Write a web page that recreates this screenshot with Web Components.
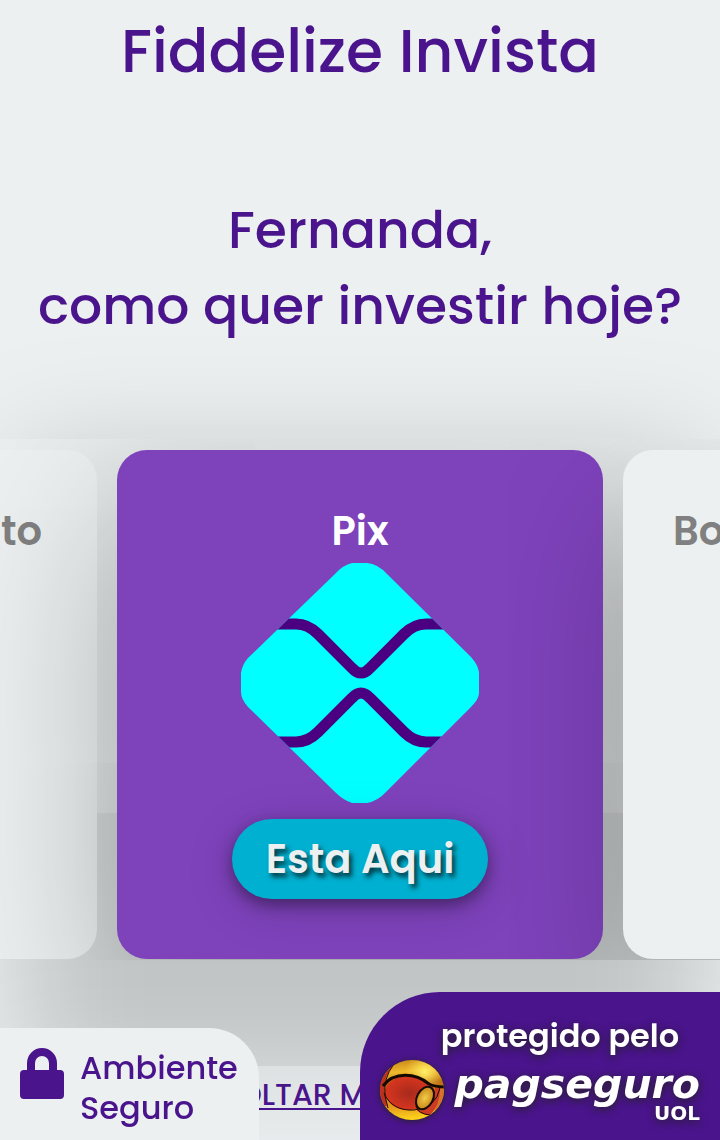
<!DOCTYPE html>
<html lang="pt-BR">
<head>
<meta charset="utf-8">
<meta name="viewport" content="width=device-width, initial-scale=1">
<title>Fiddelize Invista</title>
<style>
  html { background: #ecf0f1; }
  body { margin: 0; font-family: Poppins, Inter, sans-serif; font-weight: 500; color: #4a148c; overflow-x: hidden; }
</style>
</head>
<body>
<invest-page></invest-page>
<script>
const define = (name, html) => {
  const template = document.createElement('template');
  template.innerHTML = html;
  customElements.define(name, class extends HTMLElement {
    constructor() {
      super();
      this.attachShadow({ mode: 'open' }).append(template.content.cloneNode(true));
    }
  });
};

define('pix-logo', `
  <style>
    :host { display: block; width: 240px; }
    svg { display: block; width: 100%; }
  </style>
  <svg viewBox="0 0 240 240" role="img" aria-label="Pix">
    <clipPath id="shape"><path d="M112 0H127Q138 1 147 11L231 94Q238 102 239 109V130Q239 136 231 144L147 228Q138 238 127 240H112Q103 237 95 229L8 144Q1 136 1 129V110Q2 102 8 95L95 11Q103 2 112 0Z"/></clipPath>
    <g clip-path="url(#shape)">
      <rect width="240" height="240" fill="#00ffff"/>
      <g fill="none" stroke="#4b0082" stroke-width="11">
        <path d="M30 61H56Q68 61 78 71L112 105Q121 115 130 105L164 71Q174 61 186 61H212"/>
        <path d="M30 179H56Q68 179 78 169L112 135Q121 125 130 135L164 169Q174 179 186 179H212"/>
      </g>
    </g>
  </svg>`);

define('payment-card', `
  <style>
    :host { display: block; box-sizing: border-box; flex: 0 0 auto; width: 67.5%; min-height: 509px;
      padding: 50px 50px 60px; border-radius: 30px; background: #ecf0f1; color: #808080; text-align: center; }
    :host([selected]) { background: #7e42bb; color: #fff; box-shadow: 0 60px 170px rgba(0,0,0,.3); }
    :host([side="start"]) { text-align: right; padding-right: 55px; }
    :host([side="end"]) { text-align: left; box-shadow: 0 60px 140px rgba(0,0,0,.22); clip-path: inset(-12px -10px -2px -114px); }
    h3 { margin: 0; font-size: 40px; line-height: 63px; font-weight: 600; white-space: nowrap; }
    .body { display: flex; flex-direction: column; align-items: center; gap: 16px; }
  </style>
  <h3><slot name="title"></slot></h3>
  <div class="body"><slot></slot></div>`);

define('pill-button', `
  <style>
    :host { display: block; }
    button { width: 256px; height: 80px; border: 0; border-radius: 40px; padding: 0; background: #00b0d0;
      color: #ecf0f1; font: inherit; font-size: 40px; font-weight: 600; text-shadow: 3px 4px 5px rgba(0,0,0,.7);
      box-shadow: 0 6px 16px rgba(0,0,0,.4), 0 10px 50px rgba(0,0,0,.15); }
  </style>
  <button type="button"><slot></slot></button>`);

define('payment-carousel', `
  <style>
    :host { display: flex; flex-direction: column; align-items: center; position: relative; }
    .glow { position: absolute; inset: 20px 20px -130px; background: rgba(0,0,0,.18); filter: blur(60px); }
    .track { position: relative; box-sizing: border-box; width: 100%; display: flex; justify-content: center; gap: 20px;
      padding: 11px 0 1px; overflow: hidden;
      background: linear-gradient(rgba(236,240,241,.7) 374px, rgba(222,226,227,.7) 374px); }
  </style>
  <div class="glow"></div>
  <div class="track"><slot></slot></div>`);

define('safe-badge', `
  <style>
    :host { display: flex; box-sizing: border-box; align-items: flex-start; gap: 16px; width: 36%; height: 112px;
      padding: 20px 0 0 20px; border-top-right-radius: 50px; background: #ecf0f1; }
    svg { flex: none; width: 44px; height: 51px; }
    p { margin: 0; font-size: 32px; line-height: 40px; }
  </style>
  <svg viewBox="0 0 44 51" aria-hidden="true"><path fill="#4a148c" fill-rule="evenodd" d="M7 22V15A15 15 0 0 1 37 15V22H40Q44 22 44 26V47Q44 51 40 51H4Q0 51 0 47V26Q0 22 4 22ZM15 22H29V15A7 7 0 0 0 15 15Z"/></svg>
  <p><slot></slot></p>`);

define('pagseguro-badge', `
  <style>
    :host { display: flex; flex-direction: column; box-sizing: border-box; width: 50%; height: 148px; padding: 20px 20px 0;
      border-top-left-radius: 80px; background: #4a148c; color: #fff; text-shadow: 0 2px 8px #222; }
    p { margin: 0; padding-left: 40px; text-align: center; font-size: 32px; line-height: 48px; font-weight: 600; white-space: nowrap; }
    .brand { display: flex; justify-content: space-between; }
    svg { flex: none; width: 66px; height: 60px; filter: drop-shadow(0 1px 3px #222); }
    .name { display: flex; flex-direction: column; align-items: flex-end; }
    .word { font: italic 700 41px/48px "DejaVu Sans", sans-serif; white-space: nowrap; }
    .uol { font: 700 20px/10px "DejaVu Sans", sans-serif; }
  </style>
  <p>protegido pelo</p>
  <div class="brand">
    <svg viewBox="0 0 66 60" aria-hidden="true">
      <defs>
        <linearGradient id="gold" x1=".3" y1="0" x2=".4" y2="1"><stop offset="0" stop-color="#c98a1c"/><stop offset=".2" stop-color="#f0b92c"/><stop offset=".4" stop-color="#b96d13"/><stop offset=".8" stop-color="#e8a21c"/><stop offset="1" stop-color="#ffd51c"/></linearGradient>
        <radialGradient id="shine" cx=".68" cy=".2" r=".3"><stop offset="0" stop-color="#fff06a"/><stop offset="1" stop-color="#ffdf4a" stop-opacity="0"/></radialGradient>
        <radialGradient id="red"><stop offset="0" stop-color="#a82a1c"/><stop offset="1" stop-color="#d8361f"/></radialGradient>
        <radialGradient id="small"><stop offset="0" stop-color="#f2cc45"/><stop offset="1" stop-color="#c8871c"/></radialGradient>
        <clipPath id="ball"><ellipse cx="32" cy="30" rx="32" ry="30"/></clipPath>
      </defs>
      <g clip-path="url(#ball)">
        <rect width="66" height="60" fill="url(#gold)"/>
        <rect width="66" height="60" fill="url(#shine)"/>
        <path d="M0 4H14Q4 16 4 30L7 46H0Z" fill="#bd301d"/>
        <path d="M54 28H66V38L54 58Q57 46 54 28Z" fill="#d4742a"/>
        <path d="M60 28Q60 46 50 55Q38 54 36 49Q52 47 55 28Z" fill="#cf3a22"/>
        <path d="M5 29C12 12 40 12 53 27C55 40 42 50 28 50C15 50 7 42 5 35Z" fill="url(#red)"/>
        <path d="M3 26C14 11 36 13 49 24Q55 27 66 27" fill="none" stroke="#130900" stroke-width="3"/>
        <path d="M4 33C9 45 20 51 34 50Q56 48 60 28" fill="none" stroke="#170b05" stroke-width="1"/>
        <ellipse cx="45" cy="38" rx="8" ry="12" transform="rotate(28 45 38)" fill="url(#small)" stroke="#170b05" stroke-width="2"/>
        <path d="M36 46Q38 54 50 55M14 4Q3 18 5 36L8 48" fill="none" stroke="#170b05" stroke-width="1"/>
      </g>
    </svg>
    <div class="name"><span class="word">pagseguro</span><span class="uol">UOL</span></div>
  </div>`);

define('invest-page', `
  <style>
    :host { display: block; }
    header { position: relative; z-index: 1; text-align: center; }
    h1, h2 { margin: 0; font-weight: 500; }
    h1 { font-size: 60px; line-height: 102px; }
    h2 { padding: 90px 0 95px; font-size: 52px; line-height: 76px; }
    nav { position: relative; margin-top: 106px; height: 74px; padding: 6px 0 0 32px; box-sizing: border-box; text-align: center;
      background: rgba(236,240,241,.5); }
    a { color: #4a148c; font-size: 30px; line-height: 46px; text-underline-offset: 3px; text-decoration-thickness: 2px; white-space: nowrap; }
    footer { position: fixed; inset: auto 0 0; display: flex; justify-content: space-between; align-items: flex-end; }
  </style>
  <header>
    <h1>Fiddelize Invista</h1>
    <h2>Fernanda,<br>como quer investir hoje?</h2>
  </header>
  <main>
    <payment-carousel>
      <payment-card side="start"><span slot="title">Crédito</span></payment-card>
      <payment-card selected><span slot="title">Pix</span><pix-logo></pix-logo><pill-button>Esta Aqui</pill-button></payment-card>
      <payment-card side="end"><span slot="title">Boleto</span></payment-card>
    </payment-carousel>
  </main>
  <nav><a href="#menu">VOLTAR MENU INICIAL</a></nav>
  <footer>
    <safe-badge>Ambiente<br>Seguro</safe-badge>
    <pagseguro-badge></pagseguro-badge>
  </footer>`);
</script>
</body>
</html>
